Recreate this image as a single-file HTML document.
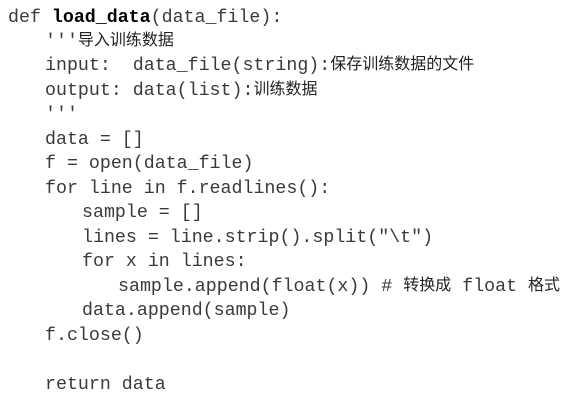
<!DOCTYPE html>
<html><head><meta charset="utf-8"><style>
html,body{margin:0;padding:0;background:#fff;width:566px;height:402px;overflow:hidden}
.l{position:absolute;white-space:pre;font-family:"Liberation Mono",monospace;font-size:18.3px;line-height:24.5px;color:#3a3a3a}
.c{font-family:"Noto Sans CJK SC",sans-serif;font-size:16px;color:#222;line-height:0;vertical-align:1px}
b{font-weight:bold;color:#000}
</style></head><body>
<div class="l" style="left:8px;top:6px">def <b>load_data</b>(data_file):</div>
<div class="l" style="left:45px;top:30px">'''<span class="c">导入训练数据</span></div>
<div class="l" style="left:45px;top:54px">input:  data_file(string):<span class="c">保存训练数据的文件</span></div>
<div class="l" style="left:45px;top:79px">output: data(list):<span class="c">训练数据</span></div>
<div class="l" style="left:45px;top:103px">'''</div>
<div class="l" style="left:45px;top:128px">data = []</div>
<div class="l" style="left:45px;top:152px">f = open(data_file)</div>
<div class="l" style="left:45px;top:177px">for line in f.readlines():</div>
<div class="l" style="left:82px;top:201px">sample = []</div>
<div class="l" style="left:82px;top:226px">lines = line.strip().split("\t")</div>
<div class="l" style="left:82px;top:250px">for x in lines:</div>
<div class="l" style="left:118px;top:275px">sample.append(float(x)) # <span class="c">转换成</span> float <span class="c">格式</span></div>
<div class="l" style="left:82px;top:299px">data.append(sample)</div>
<div class="l" style="left:45px;top:324px">f.close()</div>
<div class="l" style="left:45px;top:373px">return data</div>
</body></html>
